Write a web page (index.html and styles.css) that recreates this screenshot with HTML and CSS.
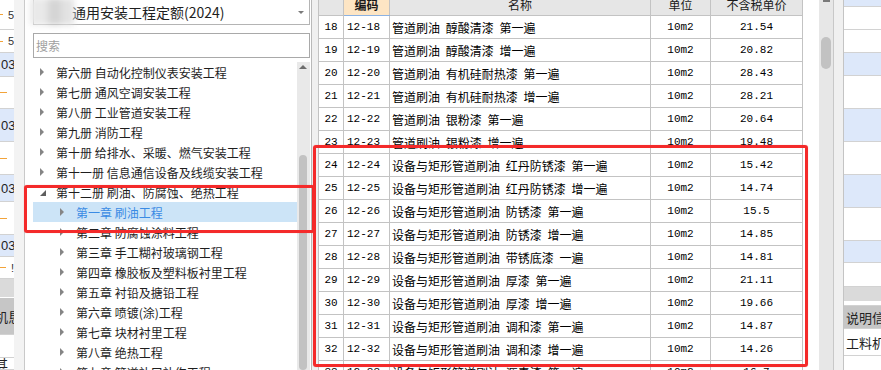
FILE: index.html
```html
<!DOCTYPE html>
<html lang="zh-CN">
<head>
    <meta charset="UTF-8">
    <title>定额选择</title>
    <link rel="stylesheet" href="styles.css">
</head>
<body>
    <div class="app">
        <div class="bg-strip bg-left">
            <div class="bg-row h30"><span class="dash"></span><span class="cut">5</span></div>
            <div class="bg-row h23"><span class="dash"></span><span class="cut">5</span></div>
            <div class="bg-row blue h24"><span class="num">03</span></div>
            <div class="bg-row h32"><span class="dash"></span></div>
            <div class="bg-row blue h33"><span class="num">03</span></div>
            <div class="bg-row h33"><span class="dash"></span></div>
            <div class="bg-row blue h27"><span class="num">03</span></div>
            <div class="bg-row h33"><span class="dash"></span></div>
            <div class="bg-row blue h22"><span class="num">03</span></div>
            <div class="bg-row h22"><span class="dash"></span><span class="cut">!</span></div>
            <div class="bg-row grey h19"></div>
            <div class="bg-row dark h37"><span class="label shift">机恳</span></div>
            <div class="bg-row h23"></div>
            <div class="bg-row h12"><span class="label shift">其</span></div>
        </div>
        <div class="gutter-left"></div>

        <div class="picker">
            <div class="logo-blur"></div>
            <div class="select">
                <span>通用安装工程定额(2024)</span>
                <span class="caret"></span>
            </div>
            <div class="search">搜索</div>
            <div class="tree">
                <div class="tree-list">
                    <div class="node"><span class="arrow"></span>第六册 自动化控制仪表安装工程</div>
                    <div class="node"><span class="arrow"></span>第七册 通风空调安装工程</div>
                    <div class="node"><span class="arrow"></span>第八册 工业管道安装工程</div>
                    <div class="node"><span class="arrow"></span>第九册 消防工程</div>
                    <div class="node"><span class="arrow"></span>第十册 给排水、采暖、燃气安装工程</div>
                    <div class="node"><span class="arrow"></span>第十一册 信息通信设备及线缆安装工程</div>
                    <div class="node"><span class="arrow open"></span>第十二册 刷油、防腐蚀、绝热工程</div>
                    <div class="node sub active"><span class="arrow"></span>第一章 刷油工程</div>
                    <div class="node sub"><span class="arrow"></span>第二章 防腐蚀涂料工程</div>
                    <div class="node sub"><span class="arrow"></span>第三章 手工糊衬玻璃钢工程</div>
                    <div class="node sub"><span class="arrow"></span>第四章 橡胶板及塑料板衬里工程</div>
                    <div class="node sub"><span class="arrow"></span>第五章 衬铅及搪铅工程</div>
                    <div class="node sub"><span class="arrow"></span>第六章 喷镀(涂)工程</div>
                    <div class="node sub"><span class="arrow"></span>第七章 块材衬里工程</div>
                    <div class="node sub"><span class="arrow"></span>第八章 绝热工程</div>
                    <div class="node sub"><span class="arrow"></span>第九章 管道补口补伤工程</div>
                </div>
                <div class="tree-scroll">
                    <span class="up"></span>
                    <span class="thumb"></span>
                </div>
            </div>
        </div>
        <div class="divider"></div>

        <div class="grid-area">
            <div class="grid-wrap">
                <table class="grid">
                    <colgroup>
                        <col class="c-no"><col class="c-code"><col class="c-name"><col class="c-unit"><col class="c-price">
                    </colgroup>
                    <tr class="head">
                        <th></th><th class="code-head">编码</th><th>名称</th><th>单位</th><th>不含税单价</th>
                    </tr>
                    <tr><td class="no">18</td><td class="code">12-18</td><td class="name">管道刷油 醇酸清漆 第一遍</td><td class="unit">10m2</td><td class="price">21.54</td></tr>
                    <tr><td class="no">19</td><td class="code">12-19</td><td class="name">管道刷油 醇酸清漆 增一遍</td><td class="unit">10m2</td><td class="price">20.82</td></tr>
                    <tr><td class="no">20</td><td class="code">12-20</td><td class="name">管道刷油 有机硅耐热漆 第一遍</td><td class="unit">10m2</td><td class="price">28.43</td></tr>
                    <tr><td class="no">21</td><td class="code">12-21</td><td class="name">管道刷油 有机硅耐热漆 增一遍</td><td class="unit">10m2</td><td class="price">28.21</td></tr>
                    <tr><td class="no">22</td><td class="code">12-22</td><td class="name">管道刷油 银粉漆 第一遍</td><td class="unit">10m2</td><td class="price">20.64</td></tr>
                    <tr><td class="no">23</td><td class="code">12-23</td><td class="name">管道刷油 银粉漆 增一遍</td><td class="unit">10m2</td><td class="price">19.48</td></tr>
                    <tr><td class="no">24</td><td class="code">12-24</td><td class="name">设备与矩形管道刷油 红丹防锈漆 第一遍</td><td class="unit">10m2</td><td class="price">15.42</td></tr>
                    <tr><td class="no">25</td><td class="code">12-25</td><td class="name">设备与矩形管道刷油 红丹防锈漆 增一遍</td><td class="unit">10m2</td><td class="price">14.74</td></tr>
                    <tr><td class="no">26</td><td class="code">12-26</td><td class="name">设备与矩形管道刷油 防锈漆 第一遍</td><td class="unit">10m2</td><td class="price">15.5</td></tr>
                    <tr><td class="no">27</td><td class="code">12-27</td><td class="name">设备与矩形管道刷油 防锈漆 增一遍</td><td class="unit">10m2</td><td class="price">14.85</td></tr>
                    <tr><td class="no">28</td><td class="code">12-28</td><td class="name">设备与矩形管道刷油 带锈底漆 一遍</td><td class="unit">10m2</td><td class="price">14.81</td></tr>
                    <tr><td class="no">29</td><td class="code">12-29</td><td class="name">设备与矩形管道刷油 厚漆 第一遍</td><td class="unit">10m2</td><td class="price">21.11</td></tr>
                    <tr><td class="no">30</td><td class="code">12-30</td><td class="name">设备与矩形管道刷油 厚漆 增一遍</td><td class="unit">10m2</td><td class="price">19.66</td></tr>
                    <tr><td class="no">31</td><td class="code">12-31</td><td class="name">设备与矩形管道刷油 调和漆 第一遍</td><td class="unit">10m2</td><td class="price">14.87</td></tr>
                    <tr><td class="no">32</td><td class="code">12-32</td><td class="name">设备与矩形管道刷油 调和漆 增一遍</td><td class="unit">10m2</td><td class="price">14.26</td></tr>
                    <tr><td class="no">33</td><td class="code">12-33</td><td class="name">设备与矩形管道刷油 沥青漆 第一遍</td><td class="unit">10m2</td><td class="price">16.7</td></tr>
                </table>
            </div>
            <div class="vscroll">
                <span class="up-stub"></span>
                <span class="thumb"></span>
            </div>
        </div>
        <div class="gutter-right"></div>

        <div class="bg-strip bg-right">
            <div class="bg-row blue h7"></div>
            <div class="bg-row h23"></div>
            <div class="bg-row h23"></div>
            <div class="bg-row blue h23"></div>
            <div class="bg-row h33"></div>
            <div class="bg-row blue h33"></div>
            <div class="bg-row h33"></div>
            <div class="bg-row blue h33"></div>
            <div class="bg-row h33"></div>
            <div class="bg-row blue h22"></div>
            <div class="bg-row h24"></div>
            <div class="bg-row grey h15"></div>
            <div class="bg-row h4"></div>
            <div class="bg-row dark h23"><span class="label">说明信息</span></div>
            <div class="bg-row h27"><span class="label">工料机</span></div>
            <div class="bg-row h19"></div>
        </div>
    </div>

    <div class="mark mark-tree"></div>
    <div class="mark mark-rows"></div>
</body>
</html>
```

FILE: styles.css
```css
* {
    box-sizing: border-box;
}
body {
    margin: 0;
    width: 881px;
    height: 370px;
    overflow: hidden;
    position: relative;
    background: #fff;
    font-family: "Noto Sans CJK SC", sans-serif;
    color: #1e1e1e;
}
.app {
    display: flex;
    height: 370px;
}

/* background window rows seen around the dialog */
.bg-strip {
    display: flex;
    flex-direction: column;
    overflow: hidden;
    flex: none;
}
.bg-left {
    width: 14px;
}
.bg-right {
    width: 38px;
    border-left: 1px solid #c4c4c4;
}
.bg-row {
    flex: none;
    display: flex;
    align-items: center;
    position: relative;
    background: #fff;
    border-bottom: 1px solid #d2d2d2;
    overflow: hidden;
    white-space: nowrap;
}
.bg-row.blue { background: #dde8fa; }
.bg-row.grey { background: #dadada; border-bottom-color: #fff; }
.bg-row.dark { background: #c6c6c6; }
.h4 { height: 4px; }
.h7 { height: 7px; }
.h12 { height: 12px; }
.h15 { height: 15px; }
.h19 { height: 19px; }
.h22 { height: 22px; }
.h23 { height: 23px; }
.h24 { height: 24px; }
.h27 { height: 27px; }
.h30 { height: 30px; }
.h32 { height: 32px; }
.h33 { height: 33px; }
.h37 { height: 37px; }
.dash {
    width: 7px;
    height: 1px;
    background: #f2a33a;
}
.cut {
    margin-left: 5px;
    font-family: "Liberation Sans", sans-serif;
    font-size: 11px;
    color: #333;
}
.num {
    font-family: "Liberation Sans", sans-serif;
    font-size: 13px;
    color: #222;
    margin-left: 1px;
}
.label {
    font-size: 13px;
    color: #222;
    margin-left: 2px;
}
.label.shift {
    margin-left: -5px;
}
.gutter-left {
    width: 11px;
    flex: none;
    background: #f3f3f3;
    border-right: 1px solid #c9c9c9;
}
.gutter-right {
    width: 10px;
    flex: none;
    background: #f0f0f0;
    border-left: 1px solid #c8c8c8;
}

/* quota picker */
.picker {
    width: 286px;
    flex: none;
    padding: 0 1px 0 8px;
    display: flex;
    flex-direction: column;
    position: relative;
}
.logo-blur {
    position: absolute;
    left: 5px;
    top: -2px;
    width: 44px;
    height: 27px;
    background:
        linear-gradient(90deg, #e9e9e9 0, #e9e9e9 40%, #d4d4d4 40%, #d4d4d4 70%, #e2e2e2 70%),
        #e4e4e4;
    filter: blur(3px);
    z-index: 2;
}
.select {
    height: 26px;
    margin-top: -1px;
    border: 1px solid #b4b4b4;
    display: flex;
    align-items: center;
    padding-left: 38px;
    font-size: 14px;
    color: #1e1e1e;
}
.caret {
    margin-left: auto;
    margin-right: 5px;
    width: 0;
    height: 0;
    border-left: 3px solid transparent;
    border-right: 3px solid transparent;
    border-top: 3px solid #7a7a7a;
}
.search {
    margin-top: 8px;
    height: 25px;
    border: 1px solid #a9a9a9;
    padding-left: 2px;
    display: flex;
    align-items: center;
    font-size: 12px;
    color: #a0a0a0;
}
.tree {
    margin-top: 4px;
    flex: 1;
    display: flex;
    overflow: hidden;
}
.tree-list {
    flex: 1;
}
.node {
    height: 20px;
    display: flex;
    align-items: center;
    padding-left: 7px;
    font-size: 12px;
    white-space: nowrap;
    color: #1e1e1e;
}
.node.sub {
    padding-left: 27px;
}
.node.active {
    background: #cce4f7;
    color: #3a8be4;
}
.arrow {
    width: 0;
    height: 0;
    border-top: 4px solid transparent;
    border-bottom: 4px solid transparent;
    border-left: 4px solid #858585;
    margin-right: 12px;
}
.arrow.open {
    border-top: none;
    border-left: 6px solid transparent;
    border-bottom: 6px solid #5e5e5e;
    margin-top: 2px;
    margin-right: 10px;
}
.tree-scroll {
    width: 13px;
    flex: none;
    background: #e9e9e9;
    display: flex;
    flex-direction: column;
}
.tree-scroll .up {
    width: 0;
    height: 0;
    margin: 3px 0 3px 2px;
    border-left: 4px solid transparent;
    border-right: 4px solid transparent;
    border-bottom: 4px solid #6d6d6d;
}
.tree-scroll .thumb {
    margin: 83px 0 0 2px;
    width: 8px;
    height: 260px;
    border-radius: 4px;
    background: #c2c2c2;
}
.divider {
    width: 7px;
    flex: none;
    background: #f0f0f0;
    border-left: 1px solid #b9b9b9;
}

/* quota item grid */
.grid-area {
    width: 515px;
    flex: none;
    display: flex;
}
.grid-wrap {
    width: 501px;
    overflow: hidden;
}
.grid {
    border-collapse: collapse;
    table-layout: fixed;
    width: 484px;
    margin-top: -8px;
    font-size: 12px;
}
.c-no { width: 25px; }
.c-code { width: 46px; }
.c-name { width: 261px; }
.c-unit { width: 60px; }
.c-price { width: 92px; }
.grid tr {
    height: 23px;
}
.grid th,
.grid td {
    border: 1px solid #c3c3c3;
    padding: 0;
    white-space: nowrap;
    overflow: hidden;
    color: #000;
}
.grid th {
    background: #e6e6e6;
    font-weight: normal;
    font-size: 12px;
    color: #1a1a1a;
}
.grid th.code-head {
    background: #fde5c4;
    font-weight: bold;
    border-bottom: 1px solid #8cb2e2;
}
.grid .no,
.grid .code,
.grid .unit,
.grid .price {
    font-family: "Liberation Mono", monospace;
    font-size: 11px;
}
.grid .no,
.grid .unit,
.grid .price {
    text-align: center;
}
.grid .code {
    padding-left: 3px;
}
.grid .name {
    padding-left: 2px;
    font-size: 12px;
    word-spacing: 3px;
}
.vscroll {
    width: 14px;
    flex: none;
    background: #e7e7e7;
    display: flex;
    flex-direction: column;
}
.vscroll .up-stub {
    width: 7px;
    height: 2px;
    margin-left: 4px;
    background: #7a7a7a;
}
.vscroll .thumb {
    margin: 35px 0 0 2px;
    width: 10px;
    height: 32px;
    border-radius: 5px;
    background: #c2c2c2;
}

/* red annotation boxes */
.mark {
    position: absolute;
    border: 3px solid #f42a2a;
    border-radius: 3px;
    box-shadow: 0 0 1px rgba(200, 0, 0, 0.4);
}
.mark-tree {
    left: 24px;
    top: 185px;
    width: 291px;
    height: 48px;
}
.mark-rows {
    left: 313px;
    top: 145px;
    width: 495px;
    height: 222px;
}
```
